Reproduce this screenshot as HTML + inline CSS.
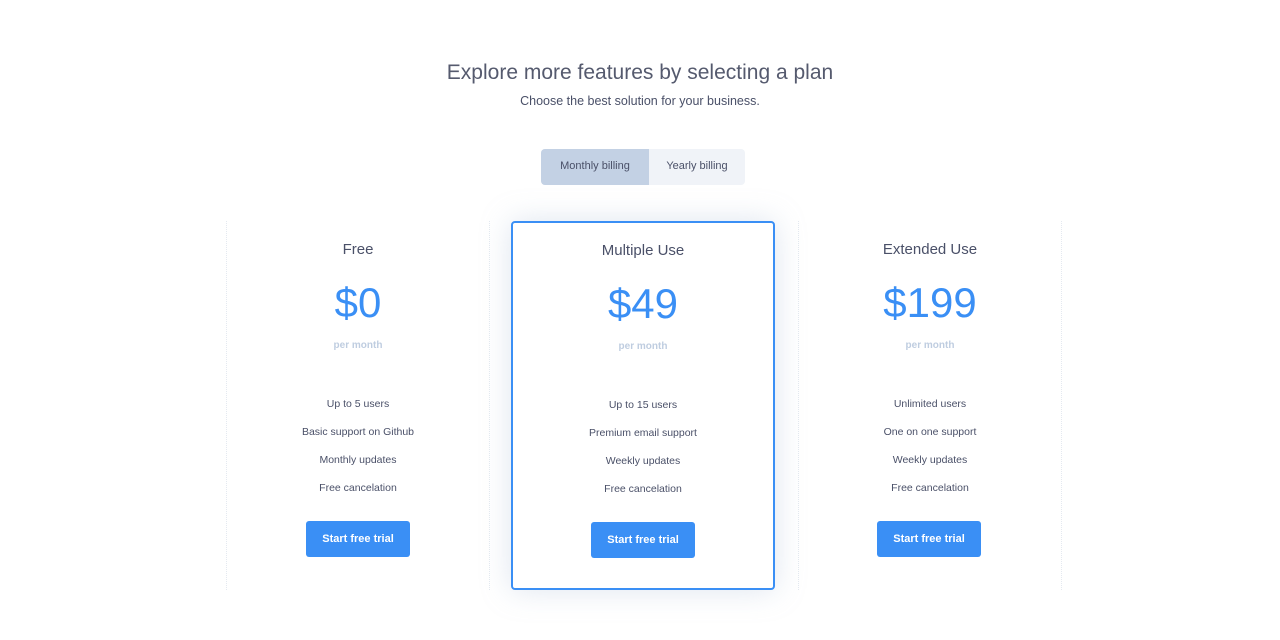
<!DOCTYPE html><html><head><style>
body{margin:0;width:1280px;height:640px;background:#fff;font-family:"Liberation Sans",sans-serif;position:relative;overflow:hidden}
.a{position:absolute;text-align:center}
h1{position:absolute;top:61px;left:0;width:1280px;margin:0;text-align:center;font-size:21px;font-weight:normal;color:#555a6e}
.sub{top:94px;left:0;width:1280px;font-size:12.5px;color:#4a5068}
.tog{position:absolute;left:541px;top:149px;width:204px;height:36px;border-radius:4px;background:#f0f3f8;font-size:11px;color:#4a5068}
.tog div{position:absolute;top:0;height:36px;line-height:34px;text-align:center}
.col{position:absolute;top:221px;width:264px;height:369px}
.side{border-left:1px dotted #e4e9f0;border-right:1px dotted #e4e9f0}
.mid{border:2px solid #3a8ff5;border-radius:4px;box-sizing:border-box;box-shadow:0 0 30px rgba(160,180,210,.35);background:#fff}
.t{position:absolute;width:100%;text-align:center;top:20px;font-size:15px;color:#4a5068}
.p{position:absolute;width:100%;text-align:center;top:58px;font-size:42px;color:#3a8ff5}
.pm{position:absolute;width:100%;text-align:center;top:119px;font-size:10px;font-weight:bold;color:#bfcde0}
.f{position:absolute;width:100%;text-align:center;font-size:10.5px;color:#4a5068}
.b{position:absolute;left:78px;top:300px;width:104px;height:36px;background:#3a8ff5;border-radius:3px;color:#fff;font-size:11px;font-weight:bold;line-height:36px;text-align:center}
</style></head><body>
<h1>Explore more features by selecting a plan</h1>
<div class="a sub">Choose the best solution for your business.</div>
<div class="tog"><div style="left:0;width:108px;background:#c3d1e4;border-radius:4px 0 0 4px">Monthly billing</div><div style="left:108px;width:96px">Yearly billing</div></div>

<div class="col side" style="left:226px;width:262px">
<div class="t">Free</div><div class="p">$0</div><div class="pm">per month</div>
<div class="f" style="top:177px">Up to 5 users</div><div class="f" style="top:205px">Basic support on Github</div><div class="f" style="top:233px">Monthly updates</div><div class="f" style="top:261px">Free cancelation</div>
<div class="b" style="left:79px">Start free trial</div></div>

<div class="col side" style="left:798px;width:262px">
<div class="t">Extended Use</div><div class="p">$199</div><div class="pm">per month</div>
<div class="f" style="top:177px">Unlimited users</div><div class="f" style="top:205px">One on one support</div><div class="f" style="top:233px">Weekly updates</div><div class="f" style="top:261px">Free cancelation</div>
<div class="b" style="left:78px">Start free trial</div></div>

<div class="col mid" style="left:511px">
<div class="t" style="top:19px">Multiple Use</div><div class="p" style="top:57px">$49</div><div class="pm" style="top:118px">per month</div>
<div class="f" style="top:176px">Up to 15 users</div><div class="f" style="top:204px">Premium email support</div><div class="f" style="top:232px">Weekly updates</div><div class="f" style="top:260px">Free cancelation</div>
<div class="b" style="top:299px;left:78px">Start free trial</div></div>
</body></html>
